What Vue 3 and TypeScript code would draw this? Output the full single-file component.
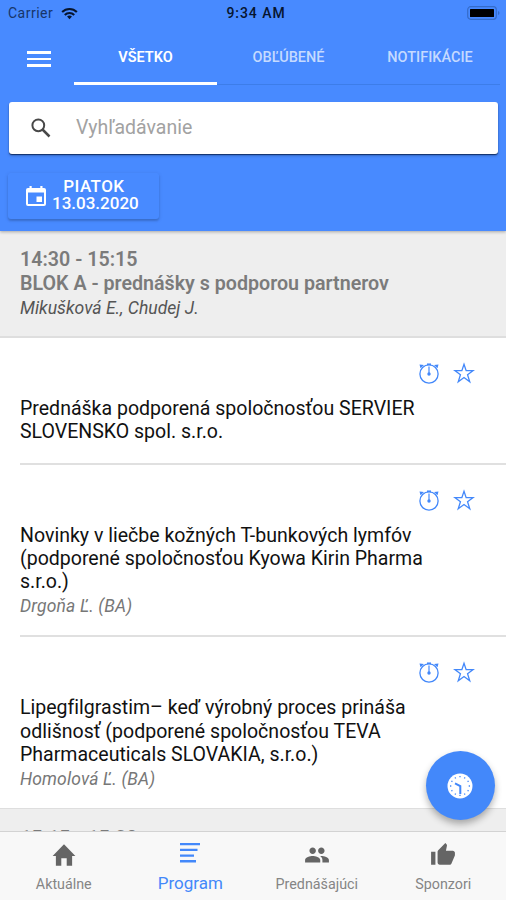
<script setup lang="ts">
import { ref } from 'vue'

interface Talk {
  title: string
  speaker?: string
}

const tabs = ['VŠETKO', 'OBĽÚBENÉ', 'NOTIFIKÁCIE']
const activeTab = ref(0)
const query = ref('')

const talks: Talk[] = [
  { title: 'Prednáška podporená spoločnosťou SERVIER SLOVENSKO spol. s.r.o.' },
  {
    title: 'Novinky v liečbe kožných T-bunkových lymfóv (podporené spoločnosťou Kyowa Kirin Pharma s.r.o.)',
    speaker: 'Drgoňa Ľ. (BA)',
  },
  {
    title: 'Lipegfilgrastim– keď výrobný proces prináša odlišnosť (podporené spoločnosťou TEVA Pharmaceuticals SLOVAKIA, s.r.o.)',
    speaker: 'Homolová Ľ. (BA)',
  },
]

const nav = [
  { label: 'Aktuálne', icon: 'M9.500 22v-7h5v7h5V13h3L12 2 1.500 13h3v9z' },
  { label: 'Program', icon: 'M2 2h20v2.3H2zM2 7.7h17.500V10H2zM2 13.400h14v2.300H2zM2 19.100h16v2.300H2z' },
  {
    label: 'Prednášajúci',
    icon: 'M16 11c1.66 0 2.99-1.34 2.99-3S17.66 5 16 5s-3 1.34-3 3 1.34 3 3 3zm-8 0c1.66 0 2.99-1.34 2.99-3S9.66 5 8 5 5 6.34 5 8s1.34 3 3 3zm0 2c-2.33 0-7 1.17-7 3.5V19h14v-2.5c0-2.33-4.67-3.5-7-3.5zm8 0c-.29 0-.62.02-.97.05 1.16.84 1.97 1.97 1.97 3.45V19h6v-2.5c0-2.33-4.67-3.5-7-3.5z',
  },
  {
    label: 'Sponzori',
    icon: 'M1 21h4V9H1v12zm22-11c0-1.1-.9-2-2-2h-6.31l.95-4.57.03-.32c0-.41-.17-.79-.44-1.06L14.17 1 7.59 7.59C7.22 7.95 7 8.45 7 9v10c0 1.1.9 2 2 2h9c.83 0 1.54-.5 1.84-1.22l3.02-7.05c.09-.23.14-.47.14-.73v-2z',
  },
]
const activeNav = ref(1)
const ticks = Array.from({ length: 12 }, (_, i) => i * 30)
</script>

<template>
  <div class="screen">
    <header class="header">
      <div class="status">
        <div class="carrier">
          <span>Carrier</span>
          <svg class="wifi" viewBox="0 0 18 13" fill="none" stroke="#07152f" stroke-width="2.2">
            <path d="M1.2 5a11 11 0 0 1 15.6 0M4 8a7.1 7.1 0 0 1 10 0" />
            <path d="M6.4 9.8a3.7 3.7 0 0 1 5.2 0L9 12.5z" fill="#07152f" stroke="none" />
          </svg>
        </div>
        <span class="clock">9:34 AM</span>
        <svg class="battery" viewBox="0 0 33 14">
          <rect x="0.7" y="0.7" width="28.6" height="12.6" rx="3" fill="none" stroke="#356cc9" stroke-width="1.2" />
          <rect x="3" y="3" width="24" height="8" rx="0.5" fill="#000" />
          <path d="M31 5v4q1.5-.7 1.5-2T31 5" fill="#356cc9" />
        </svg>
      </div>

      <div class="tabbar">
        <button class="menu" aria-label="Menu"><i /><i /><i /></button>
        <nav class="tabs">
          <button
            v-for="(tab, i) in tabs"
            :key="tab"
            class="tab"
            :class="{ active: i === activeTab }"
            @click="activeTab = i"
          >{{ tab }}</button>
        </nav>
      </div>

      <label class="search">
        <svg class="lens" viewBox="0 0 20 20" fill="none" stroke="#484848">
          <circle cx="7.3" cy="7.3" r="5.9" stroke-width="2" />
          <path d="M11.5 11.5l7 7" stroke-width="2.5" />
        </svg>
        <input v-model="query" type="text" placeholder="Vyhľadávanie" />
      </label>

      <button class="date">
        <svg class="calendar" viewBox="0 0 20 20" fill="#fff">
          <path fill-rule="evenodd" d="M3.5 0h2.2v2h8.6V0h2.2v2H18a2 2 0 0 1 2 2v14a2 2 0 0 1-2 2H2a2 2 0 0 1-2-2V4a2 2 0 0 1 2-2h1.500zM2 6.500V18h16V6.500z" />
          <path d="M10.500 10.500h5.500V16h-5.500z" />
        </svg>
        <span class="date-text"><span class="day">PIATOK</span><span>13.03.2020</span></span>
      </button>
    </header>

    <main class="content">
      <section class="block">
        <h2 class="time">14:30 - 15:15</h2>
        <h2 class="name">BLOK A - prednášky s podporou partnerov</h2>
        <p class="chairs">Mikušková E., Chudej J.</p>
      </section>

      <article v-for="talk in talks" :key="talk.title" class="talk">
        <div class="actions">
          <svg class="alarm" viewBox="0 0 22 22" fill="none" stroke="#4388fa">
            <circle cx="11" cy="12" r="9.100" stroke-width="1.300" />
            <path d="M11 4.500V12" stroke-width="1.200" />
            <path d="M9 2.300h4" stroke-width="1.700" />
            <circle cx="11" cy="12" r="1.700" fill="#4388fa" stroke="none" />
            <path d="M1.500 2.500l4.500.4L2.500 6.300zM20.500 2.500l-4.500.4 3.500 3.400z" fill="#4388fa" stroke="none" />
          </svg>
          <svg class="star" viewBox="0 0 22 22" fill="none" stroke="#4388fa" stroke-width="1.300">
            <path d="M11 2.200l2.150 6.400h7.050l-5.650 4.100 2.200 7L11 15.500l-5.750 4.200 2.200-7L1.800 8.600h7.050z" />
          </svg>
        </div>
        <h3 class="title">{{ talk.title }}</h3>
        <p v-if="talk.speaker" class="speaker">{{ talk.speaker }}</p>
      </article>

      <section class="block next">
        <h2 class="time">15:15 - 15:20</h2>
      </section>
    </main>

    <button class="fab" aria-label="Teraz">
      <svg viewBox="0 0 26 26">
        <circle cx="13" cy="13" r="12.500" fill="#fff" />
        <g stroke="#4388fa" stroke-width="1.300" fill="none">
          <path v-for="a in ticks" :key="a" d="M13 3v1.300" :transform="`rotate(${a} 13 13)`" />
        </g>
        <path d="M8 10.300l5.300 2.700v8" fill="none" stroke="#4388fa" stroke-width="2" />
      </svg>
    </button>

    <footer class="footer">
      <button
        v-for="(item, i) in nav"
        :key="item.label"
        class="nav-item"
        :class="{ active: i === activeNav }"
        @click="activeNav = i"
      >
        <svg viewBox="0 0 24 24" fill="currentColor"><path :d="item.icon" /></svg>
        <span>{{ item.label }}</span>
      </button>
    </footer>
  </div>
</template>

<style>
body {
  margin: 0;
  overflow: hidden;
}
</style>

<style scoped>
.screen {
  position: relative;
  display: flex;
  flex-direction: column;
  width: 506px;
  height: 900px;
  overflow: hidden;
  background: #fff;
  font-family: Roboto, "Liberation Sans", sans-serif;
  font-variant-ligatures: none;
}
.screen * {
  box-sizing: border-box;
}
button {
  margin: 0;
  padding: 0;
  border: 0;
  background: none;
  font-family: inherit;
}
h2, h3, p {
  margin: 0;
}
svg {
  display: block;
}
.header {
  position: relative;
  z-index: 1;
  flex: none;
  height: 231px;
  background: #488aff;
  box-shadow: 0 1px 3px rgba(0, 0, 0, 0.3);
}
.status {
  display: grid;
  grid-template-columns: 1fr auto 1fr;
  align-items: center;
  height: 26px;
  padding: 0 6px 0 8px;
  color: #07152f;
  font-size: 14px;
}
.carrier {
  display: flex;
  align-items: center;
  gap: 8px;
  color: #173569;
  letter-spacing: 0.5px;
}
.wifi {
  width: 17px;
  height: 13px;
}
.clock {
  padding-left: 4px;
  font-weight: 500;
  letter-spacing: 0.95px;
}
.battery {
  justify-self: end;
  width: 33px;
  height: 14px;
}
.tabbar {
  display: flex;
  height: 58px;
  margin-top: 1px;
  padding-right: 6px;
}
.menu {
  display: flex;
  flex-direction: column;
  gap: 4px;
  width: 74px;
  padding: 24px 23px 0 27px;
}
.menu i {
  height: 2.700px;
  background: #fff;
}
.tabs {
  display: grid;
  flex: 1;
  grid-template-columns: 143px 143px 1fr;
}
.tab {
  padding-top: 4px;
  border-bottom: 1px solid #3d7de9;
  color: #c5daff;
  font-size: 14.500px;
  font-weight: 500;
}
.tab.active {
  border-bottom: 3px solid #fff;
  padding-top: 6px;
  color: #fff;
  font-weight: 600;
}
.search {
  display: flex;
  align-items: center;
  height: 52px;
  margin: 17px 8px 0 9px;
  padding-left: 22px;
  border-radius: 3px;
  background: #fff;
  box-shadow: 0 1px 1px rgba(0, 20, 60, 0.7), 0 2px 3px rgba(0, 0, 0, 0.2);
}
.lens {
  width: 20px;
  height: 20px;
  margin-top: -1px;
}
.search input {
  flex: 1;
  margin: -2px 0 0 25px;
  padding: 0;
  border: 0;
  outline: 0;
  font: 19.500px Roboto, sans-serif;
}
.search input::placeholder {
  color: #a2a2a2;
}
.date {
  display: flex;
  align-items: center;
  width: 151px;
  height: 46px;
  margin: 19px 0 0 8px;
  padding-left: 18px;
  border-radius: 3px;
  color: #fff;
  box-shadow: 0 2px 2px rgba(0, 0, 0, 0.14), 0 1px 4px rgba(0, 0, 0, 0.12);
}
.calendar {
  width: 20px;
  height: 20px;
}
.date-text {
  display: flex;
  flex-direction: column;
  align-items: center;
  margin: 0 0 2px 6px;
  font-size: 17px;
  font-weight: 500;
  line-height: 17px;
}
.day {
  margin-right: 3px;
  letter-spacing: 0.4px;
}
.content {
  flex: 1;
  overflow: hidden;
}
.block {
  height: 107px;
  padding: 17px 20px;
  border-bottom: 2px solid #dedede;
  background: #eee;
  color: #7b7b7b;
}
.time, .name {
  font-size: 19.660px;
  font-weight: 600;
  line-height: 24.400px;
}
.chairs {
  color: #555;
  font-size: 17.600px;
  font-style: italic;
  line-height: 23.500px;
}
.talk {
  margin-left: 20px;
  border-bottom: 2px solid #e0e0e0;
}
.talk:last-of-type {
  border-bottom: 0;
}
.actions {
  display: flex;
  justify-content: flex-end;
  gap: 13px;
  padding: 24px 31px 0 0;
}
.actions svg {
  width: 22px;
  height: 22px;
}
.title {
  width: 430px;
  padding: 13px 0 19px;
  color: #111;
  font-size: 19.540px;
  font-weight: 400;
  line-height: 23.300px;
}
.talk:has(.speaker) .title {
  padding-bottom: 0;
}
.speaker {
  padding: 2px 0 18px;
  color: #777;
  font-size: 17.500px;
  font-style: italic;
  letter-spacing: 0.15px;
  line-height: 22px;
}
.fab {
  position: absolute;
  z-index: 2;
  top: 751px;
  left: 426px;
  display: grid;
  place-items: center;
  width: 69px;
  height: 69px;
  padding-right: 2px;
  border-radius: 50%;
  background: #4388fa;
  box-shadow: 0 4px 7px rgba(0, 0, 0, 0.3);
}
.fab svg {
  width: 26px;
  height: 26px;
}
.next {
  padding-top: 18px;
  border-top: 1px solid #dedede;
}
.footer {
  display: grid;
  flex: none;
  grid-template-columns: repeat(4, 1fr);
  height: 69px;
  border-top: 1px solid #d3d3d3;
  background: #f8f8f8;
}
.nav-item {
  display: flex;
  flex-direction: column;
  align-items: center;
  padding: 10px 0 0 1px;
  color: #656565;
  font-size: 14.300px;
}
.nav-item svg {
  width: 26px;
  height: 26px;
}
.nav-item span {
  margin-top: 7px;
  color: #858585;
  line-height: 18px;
}
.nav-item.active {
  padding-top: 9px;
  color: #4388fa;
  font-size: 17px;
}
.nav-item.active svg {
  width: 24px;
  height: 24px;
}
.nav-item.active span {
  margin-top: 9px;
  color: inherit;
}
</style>
